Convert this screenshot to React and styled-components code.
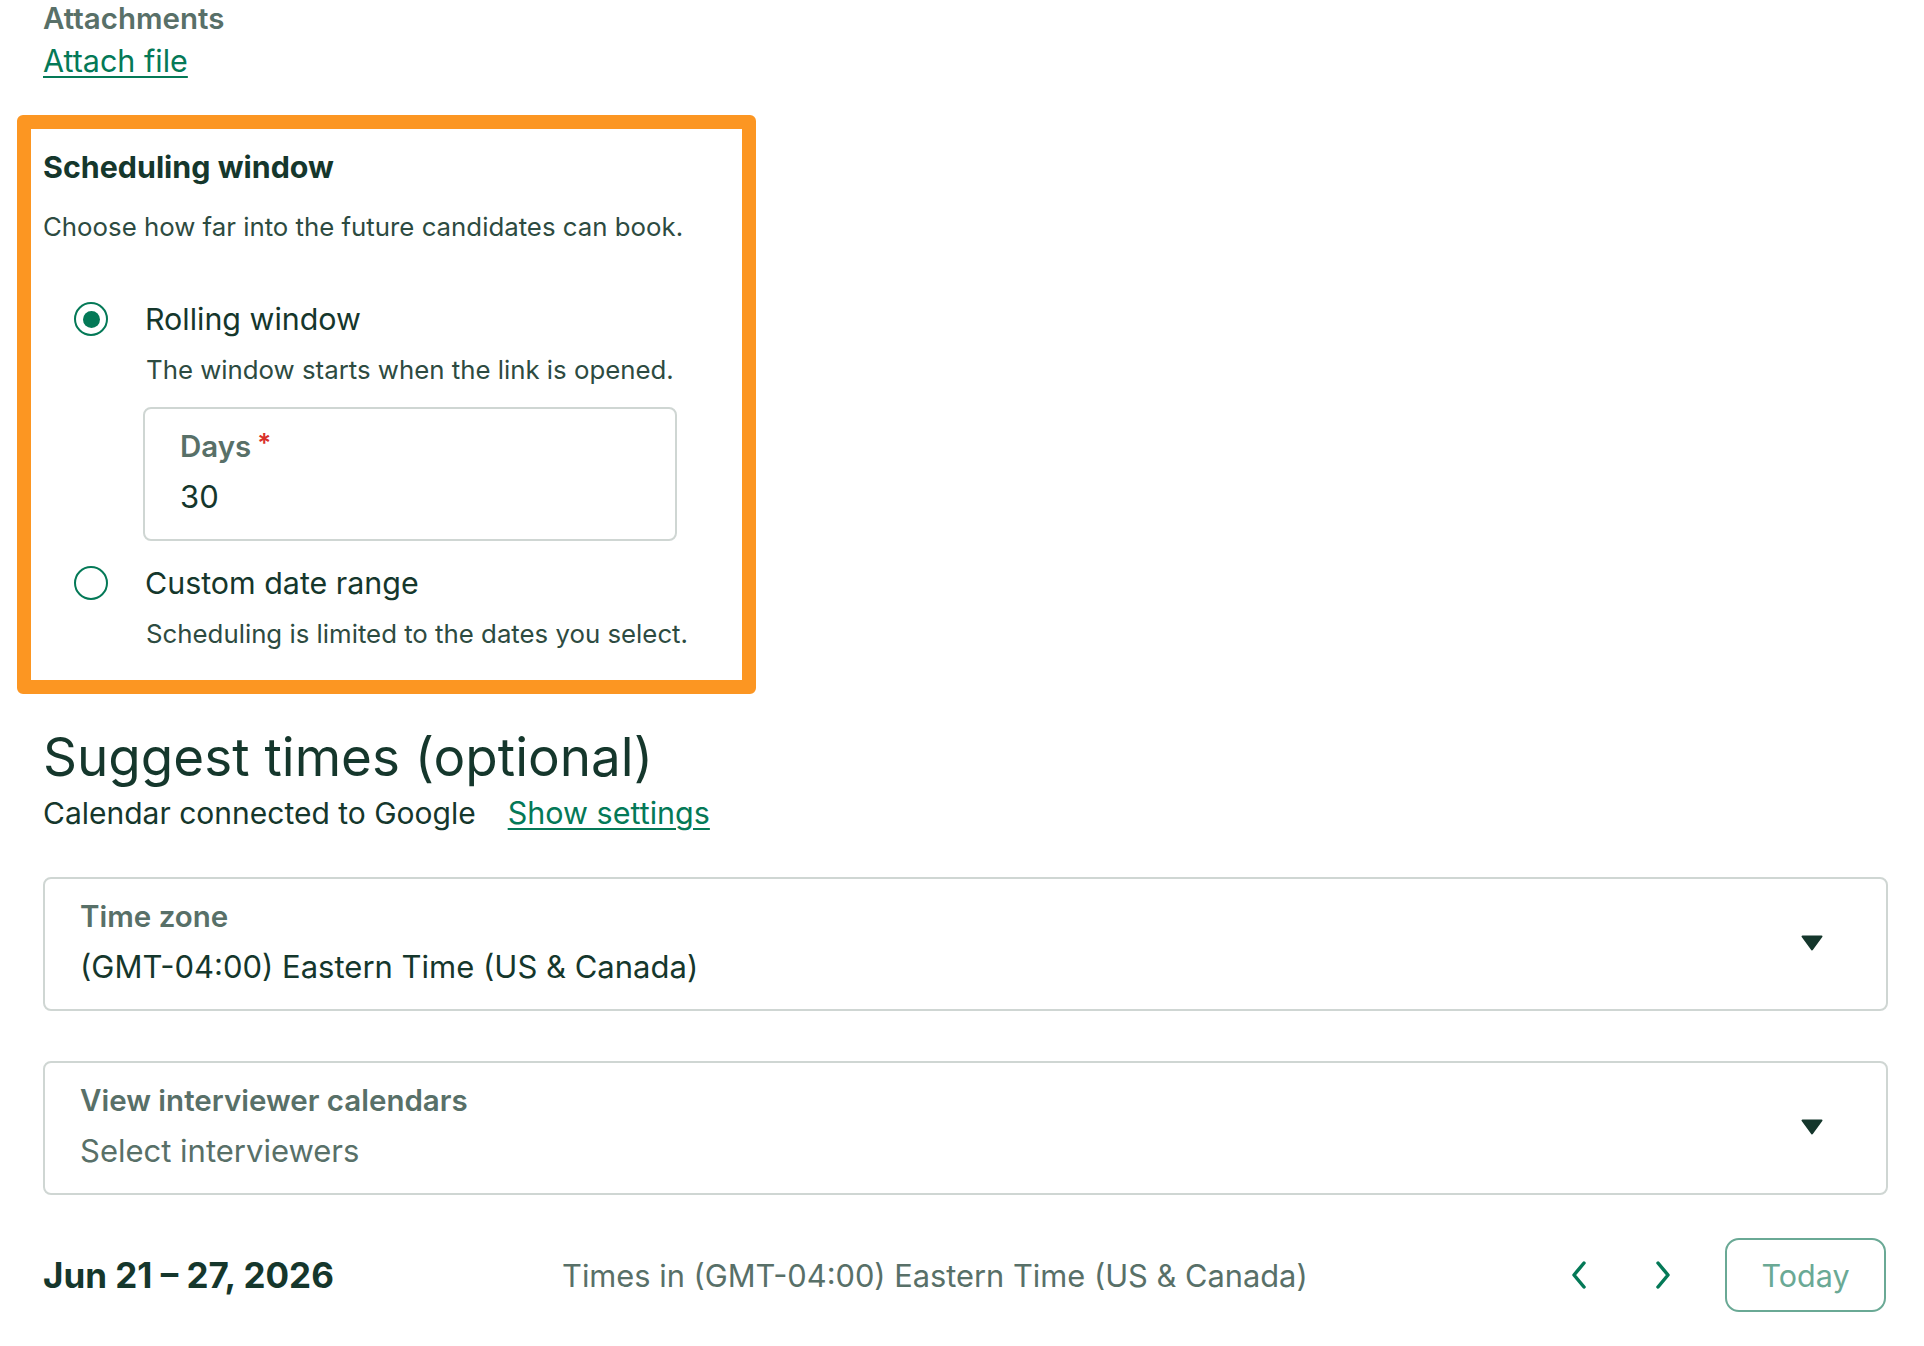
import React from "react";
import styled, { createGlobalStyle } from "styled-components";

const GlobalStyle = createGlobalStyle`
  html, body {
    margin: 0;
    padding: 0;
    background: #fff;
  }
  body {
    font-family: Inter, "Noto Sans", "Liberation Sans", sans-serif;
    color: #15372c;
  }
  * {
    box-sizing: border-box;
  }
`;

const Page = styled.div`
  padding: 2px 36px 40px 43px;
  width: 1924px;
`;

const FieldLabel = styled.div`
  font-size: 29.5px;
  line-height: 32px;
  font-weight: 600;
  color: #587068;
  white-space: nowrap;
`;

const Link = styled.a`
  font-size: 30.5px;
  line-height: 36px;
  color: #047957;
  text-decoration: underline;
  text-underline-offset: 4px;
  text-decoration-thickness: 2px;
  margin-top: ${(p) => p.$top || 0}px;
  margin-left: ${(p) => p.$left || 0}px;
  display: inline-block;
  cursor: pointer;
`;

const Highlight = styled.section`
  margin: 36px 0 0 -26px;
  width: 739px;
  border: 14px solid #fc9622;
  border-radius: 6px;
  padding: 20px 12px 30px 12px;
`;

const SectionTitle = styled.h3`
  margin: 0;
  font-size: 30.4px;
  line-height: 36px;
  font-weight: 700;
  color: #15372c;
`;

const Help = styled.p`
  margin: ${(p) => p.$top || 0}px 0 0 ${(p) => p.$left || 0}px;
  font-size: 25.8px;
  line-height: 32px;
  color: #2d4b41;
  white-space: nowrap;
`;

const RadioRow = styled.label`
  display: flex;
  align-items: center;
  gap: 37px;
  margin: ${(p) => p.$top}px 0 0 31px;
  height: 40px;
  font-size: 30.4px;
  color: #15372c;
  cursor: pointer;
`;

const RadioCircle = styled.span`
  width: 34px;
  height: 34px;
  flex: 0 0 34px;
  border-radius: 50%;
  border: 2.5px solid #047957;
  display: flex;
  align-items: center;
  justify-content: center;
  &::after {
    content: "";
    width: 17px;
    height: 17px;
    border-radius: 50%;
    background: #047957;
    display: ${(p) => (p.$checked ? "block" : "none")};
  }
`;

const InputBox = styled.div`
  border: 2px solid #cfd6d3;
  border-radius: 8px;
  padding: 21px 35px 24px 35px;
  background: #fff;
  margin: ${(p) => p.$top || 0}px 0 0 ${(p) => p.$left || 0}px;
  width: ${(p) => (p.$width ? p.$width + "px" : "auto")};
  display: flex;
  align-items: center;
  justify-content: space-between;
`;

const InputBody = styled.div`
  display: flex;
  flex-direction: column;
  gap: 17px;
`;

const Required = styled.span`
  color: #d9302a;
  margin-left: 6px;
  font-size: 26px;
  vertical-align: top;
  position: relative;
  top: -3px;
`;

const Value = styled.div`
  font-size: 31px;
  line-height: 36px;
  color: ${(p) => (p.$muted ? "#587068" : "#15372c")};
  white-space: nowrap;
`;

const Caret = styled.svg`
  width: 22px;
  height: 16px;
  margin-right: 28px;
  flex: 0 0 auto;
`;

const Heading = styled.h2`
  margin: 33px 0 0 0;
  font-size: 53px;
  line-height: 60px;
  font-weight: 400;
  color: #15372c;
`;

const ConnectedRow = styled.div`
  display: flex;
  align-items: baseline;
  margin-top: 8px;
  font-size: 30px;
  line-height: 36px;
  color: #15372c;
`;

const SelectStack = styled.div`
  display: flex;
  flex-direction: column;
  gap: 50px;
  margin-top: 46px;
`;

const Toolbar = styled.div`
  display: flex;
  align-items: center;
  margin-top: 43px;
  height: 74px;
`;

const DateRange = styled.div`
  flex: 0 0 519px;
  font-size: 35px;
  font-weight: 700;
  color: #15372c;
  white-space: nowrap;
`;

const TimesNote = styled.div`
  flex: 1;
  font-size: 30.8px;
  color: #587068;
  white-space: nowrap;
`;

const NavButton = styled.button`
  width: 60px;
  height: 60px;
  border: none;
  background: transparent;
  display: flex;
  align-items: center;
  justify-content: center;
  padding: 0;
  cursor: pointer;
  margin-right: ${(p) => p.$gap}px;
`;

const TodayButton = styled.button`
  width: 161px;
  height: 74px;
  border: 2px solid #6aa995;
  border-radius: 14px;
  background: #fff;
  color: #6aa995;
  font-family: inherit;
  font-size: 30.5px;
  margin-right: 2px;
`;

const Chevron = ({ dir }) => (
  <svg width="16" height="28" viewBox="0 0 16 28" fill="none">
    <path
      d={dir === "left" ? "M13 2 L3 14 L13 26" : "M3 2 L13 14 L3 26"}
      stroke="#047957"
      strokeWidth="3.5"
      strokeLinecap="round"
      strokeLinejoin="round"
    />
  </svg>
);

const DownCaret = () => (
  <Caret viewBox="0 0 22 16">
    <path d="M1.5 1.5 H20.5 L11 14.5 Z" fill="#15372c" stroke="#15372c" strokeWidth="2" strokeLinejoin="round" />
  </Caret>
);

const Select = ({ label, value, muted }) => (
  <InputBox>
    <InputBody>
      <FieldLabel>{label}</FieldLabel>
      <Value $muted={muted}>{value}</Value>
    </InputBody>
    <DownCaret />
  </InputBox>
);

export default function App() {
  return (
    <Page>
      <GlobalStyle />
      <FieldLabel>Attachments</FieldLabel>
      <Link $top={9}>Attach file</Link>

      <Highlight>
        <SectionTitle>Scheduling window</SectionTitle>
        <Help $top={26}>Choose how far into the future candidates can book.</Help>

        <RadioRow $top={56}>
          <RadioCircle $checked />
          Rolling window
        </RadioRow>
        <Help $top={15} $left={103}>The window starts when the link is opened.</Help>
        <InputBox $top={21} $left={100} $width={534}>
          <InputBody>
            <FieldLabel>
              Days<Required>*</Required>
            </FieldLabel>
            <Value>30</Value>
          </InputBody>
        </InputBox>

        <RadioRow $top={22}>
          <RadioCircle />
          Custom date range
        </RadioRow>
        <Help $top={15} $left={103}>Scheduling is limited to the dates you select.</Help>
      </Highlight>

      <Heading>Suggest times (optional)</Heading>
      <ConnectedRow>
        Calendar connected to Google
        <Link $left={32}>Show settings</Link>
      </ConnectedRow>

      <SelectStack>
        <Select label="Time zone" value="(GMT-04:00) Eastern Time (US & Canada)" />
        <Select label="View interviewer calendars" value="Select interviewers" muted />
      </SelectStack>

      <Toolbar>
        <DateRange>Jun 21 – 27, 2026</DateRange>
        <TimesNote>Times in (GMT-04:00) Eastern Time (US &amp; Canada)</TimesNote>
        <NavButton $gap={24} aria-label="Previous week">
          <Chevron dir="left" />
        </NavButton>
        <NavButton $gap={32} aria-label="Next week">
          <Chevron dir="right" />
        </NavButton>
        <TodayButton>Today</TodayButton>
      </Toolbar>
    </Page>
  );
}
